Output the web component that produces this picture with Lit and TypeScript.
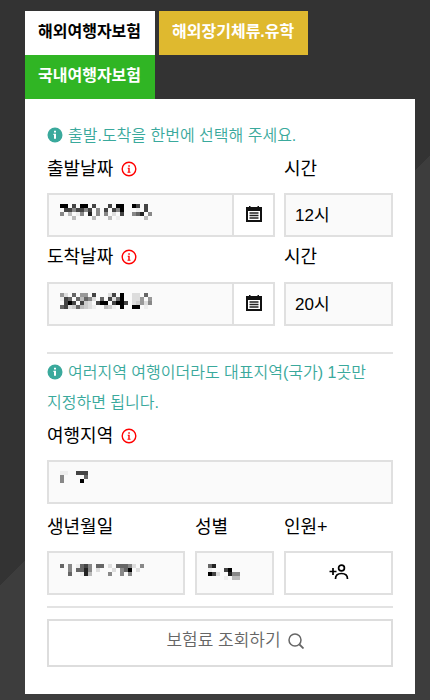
import { LitElement, html, svg, css } from "lit";
import { customElement, property } from "lit/decorators.js";

// Masked values: one string per row of 4px blocks, one hex grey level per block, "." is clear.
const MASKS: Record<string, string[]> = {
  depart: [
    "00.4.00.4...4.00..04.4.",
    ".4484484.8.4.480...e.4.",
    "8.b.e8.2.8.8.d.4..862.8",
    "...b....b...b.e......b.",
  ],
  arrive: [
    "9d.6.99.4...d4.0..dd.6.",
    "e46.6b68d.6.4d60..dd9.9",
    ".404.4cd.400.4004.dc9d8",
    "64dc6bcde..bce.0..00.e.",
  ],
  region: ["ee..444", "8.....6", "8....0."],
  birth: ["6.8.e648.66.d.6668d.8", "..8.6628.d...d.860.d.", "..6..e2b....8..8.8..."],
  gender: ["62......", "e...40..", "04d..288", "....e.bb"],
};

@customElement("masked-value")
export class MaskedValue extends LitElement {
  @property() name = "";

  static styles = css`
    :host { display: block; pointer-events: none; }
    svg { display: block; }
  `;

  render() {
    const rows = MASKS[this.name] ?? [];
    const w = Math.max(...rows.map((r) => r.length)) * 4;
    const h = rows.length * 4;
    return html`<svg width=${w} height=${h} shape-rendering="crispEdges" aria-hidden="true">
      ${rows.map((row, y) =>
        [...row].map((c, x) =>
          c === "." ? null : svg`<rect x=${x * 4} y=${y * 4} width="4" height="4" fill=${"#" + c.repeat(3)} />`
        )
      )}
    </svg>`;
  }
}

const infoSolid = html`<svg class="info" viewBox="0 0 16 16" aria-hidden="true">
  <circle cx="8" cy="8" r="7.5" fill="currentColor" />
  <path d="M7 3.8h2v1.8H7zM6.4 6.8H9v5H7V8h-.6z" fill="#fff" />
</svg>`;

const infoLine = html`<svg class="info red" viewBox="0 0 16 16" aria-hidden="true">
  <circle cx="8" cy="8" r="6.8" fill="none" stroke="currentColor" stroke-width="1.4" />
  <path d="M7.3 4.2h1.5v1.5H7.3zM6.7 6.8h2v4h.8v1H6.5v-1h.8V7.8h-.6z" fill="currentColor" />
</svg>`;

const calendar = html`<svg width="16" height="16" viewBox="0 0 16 16" aria-hidden="true">
  <path d="M3 0h1.5v1h7V0H13v1h3v4H0V1h3z" fill="#111" />
  <path d="M1 4.5V15h14V4.5" fill="none" stroke="#111" stroke-width="2" />
  <path d="M3.5 7h9M3.5 9.5h9M3.5 12h9" stroke="#222" stroke-width="1.5" />
</svg>`;

const addPerson = html`<svg width="20" height="16" viewBox="0 0 20 16" fill="none" stroke="#000" stroke-width="1.7" aria-hidden="true">
  <path d="M.5 7.5h7M4 4v7" />
  <circle cx="12.5" cy="4" r="2.9" />
  <path d="M6.5 15c0-3.5 2.5-5.500 6-5.500s6 2 6 5.500" />
</svg>`;

const search = html`<svg width="16" height="16" viewBox="0 0 16 16" fill="none" stroke="#666" stroke-width="1.5" aria-hidden="true">
  <circle cx="7" cy="7" r="6" />
  <path d="M11.5 11.5l4 4" stroke-width="1.8" />
</svg>`;

@customElement("app-root")
export class AppRoot extends LitElement {
  static styles = css`
    :host {
      display: block;
      box-sizing: border-box;
      min-height: 100vh;
      padding: 11px 15px 6px 25px;
      background: linear-gradient(135deg, #333 414px, #3d3d3d 414px);
      font-family: "Liberation Sans", "Noto Sans CJK KR", sans-serif;
      color: #000;
      word-break: keep-all;
    }
    * { box-sizing: border-box; }
    button, input, select { font: inherit; color: inherit; border-radius: 0; margin: 0; }
    .tabs { display: flex; flex-wrap: wrap; column-gap: 4px; }
    .tab {
      height: 44px;
      padding: 0 14px 2px 13px;
      border: 0;
      font-size: 16px;
      line-height: 24px;
      font-weight: 700;
      color: #fff;
      white-space: nowrap;
    }
    .white { background: #fff; color: #000; }
    .gold { background: #dfb92f; }
    .green { background: #30b524; }
    .card { background: #fff; padding: 22px 22px 27px; }
    .hint {
      margin: 0;
      font-size: 16px;
      line-height: 30px;
      font-weight: 350;
      color: #3aa99c;
    }
    .info { width: 16px; height: 16px; vertical-align: -2px; margin: 0 1px; }
    .hint .info { margin: 0 5px 0 0; }
    .red { color: #f00; flex: none; }
    .row { display: grid; gap: 0 10px; }
    .dates { grid-template-columns: minmax(0, 228fr) minmax(0, 109fr); column-gap: 9px; }
    .people { grid-template-columns: minmax(0, 138fr) minmax(0, 79fr) minmax(0, 109fr); }
    .label {
      display: flex;
      align-items: center;
      gap: 7px;
      height: 42px;
      padding-bottom: 6px;
      font-size: 18px;
      line-height: 26px;
    }
    .dates .label { height: 45px; }
    .dates .first { height: 42px; }
    .people .label { height: 47px; padding-bottom: 2px; }
    .field { position: relative; display: flex; height: 44px; }
    .box {
      flex: 1;
      min-width: 0;
      width: 100%;
      height: 44px;
      padding: 0 9px;
      border: 2px solid #e0e0e0;
      background: #fafafa;
      font-size: 17px;
      appearance: none;
      outline: 0;
    }
    .icon {
      display: flex;
      align-items: center;
      justify-content: center;
      width: 43px;
      height: 44px;
      padding: 0 0 2px;
      border: 2px solid #e0e0e0;
      background: #fff;
    }
    .cal { margin-left: -2px; }
    .wide { width: 100%; }
    masked-value { position: absolute; left: 13px; top: 11px; }
    .people masked-value { top: 13px; }
    .rule { height: 2px; border: 0; margin: 0; background: #e3e3e3; }
    .split { margin: 26px 0 4px; }
    .end { margin: 11px 0; }
    .submit {
      display: flex;
      align-items: center;
      justify-content: center;
      gap: 7px;
      width: 100%;
      height: 48px;
      padding: 0 0 4px 30px;
      border: 2px solid #ddd;
      background: #fff;
      color: #666;
      font-size: 17px;
      line-height: 26px;
      font-weight: 350;
    }
  `;

  private date(id: string, label: string, timeId: string, time: string, first = false) {
    const cls = first ? "label first" : "label";
    return html`<div class="row dates">
      <label class=${cls} for=${id}>${label} ${infoLine}</label>
      <label class=${cls} for=${timeId}>시간</label>
      <div class="field">
        <input class="box" id=${id} readonly />
        <masked-value name=${id}></masked-value>
        <button class="icon cal" type="button" aria-label=${label}>${calendar}</button>
      </div>
      <select class="box" id=${timeId}><option>${time}</option></select>
    </div>`;
  }

  render() {
    return html`
      <nav class="tabs">
        <button class="tab white" type="button">해외여행자보험</button>
        <button class="tab gold" type="button">해외장기체류.유학</button>
        <button class="tab green" type="button">국내여행자보험</button>
      </nav>
      <form class="card">
        <p class="hint">${infoSolid}출발.도착을 한번에 선택해 주세요.</p>
        ${this.date("depart", "출발날짜", "depart-time", "12시", true)}
        ${this.date("arrive", "도착날짜", "arrive-time", "20시")}
        <hr class="rule split" />
        <p class="hint">${infoSolid}여러지역 여행이더라도 대표지역(국가) 1곳만 지정하면 됩니다.</p>
        <label class="label" for="region">여행지역 ${infoLine}</label>
        <div class="field">
          <input class="box" id="region" readonly />
          <masked-value name="region"></masked-value>
        </div>
        <div class="row people">
          <label class="label" for="birth">생년월일</label>
          <label class="label" for="gender">성별</label>
          <label class="label" for="add">인원+</label>
          <div class="field">
            <input class="box" id="birth" readonly />
            <masked-value name="birth"></masked-value>
          </div>
          <div class="field">
            <select class="box" id="gender"><option></option></select>
            <masked-value name="gender"></masked-value>
          </div>
          <button class="icon wide" id="add" type="button">${addPerson}</button>
        </div>
        <hr class="rule end" />
        <button class="submit" type="button">보험료 조회하기 ${search}</button>
      </form>
    `;
  }
}
